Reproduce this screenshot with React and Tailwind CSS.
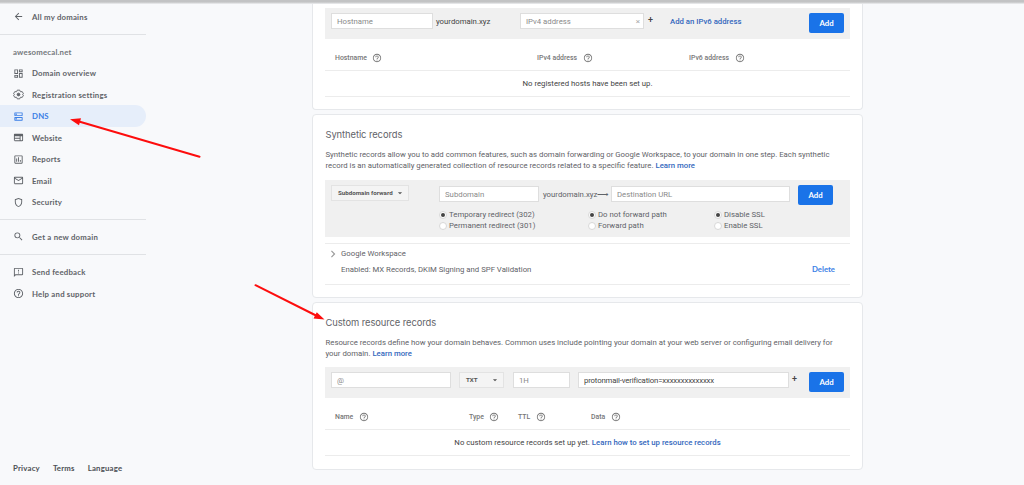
import React from "react";
import {
  MdArrowBack,
  MdArrowDropDown,
  MdChevronRight,
  MdHelpOutline,
  MdMailOutline,
  MdOutlineAssessment,
  MdOutlineDashboard,
  MdOutlineDns,
  MdOutlineFeedback,
  MdOutlineShield,
  MdOutlineWeb,
  MdSearch,
} from "react-icons/md";

const domainLinks = [
  { label: "Domain overview", icon: MdOutlineDashboard },
  { label: "Registration settings", icon: HexGear },
  { label: "DNS", icon: MdOutlineDns, active: true },
  { label: "Website", icon: MdOutlineWeb },
  { label: "Reports", icon: MdOutlineAssessment },
  { label: "Email", icon: MdMailOutline },
  { label: "Security", icon: MdOutlineShield },
];

const supportLinks = [
  { label: "Send feedback", icon: MdOutlineFeedback },
  { label: "Help and support", icon: MdHelpOutline },
];

export default function App() {
  return (
    <div className="relative flex h-[485px] w-[1024px] overflow-hidden bg-[#f8f9fb] font-['Roboto',sans-serif] text-[7.78px] leading-[11px] text-[#5f6368]">
      <Sidebar />
      <main className="ml-[166px] flex w-[551px] flex-col gap-[4px]">
        <RegisteredHosts />
        <SyntheticRecords />
        <CustomRecords />
      </main>

      {/* Bottom edge of the app bar */}
      <div className="absolute inset-x-0 top-0 h-[4px] bg-linear-to-b from-[#c2c3c4] from-50% to-[#f0f1f3]" />
      <Arrows />
    </div>
  );
}

/* Sidebar */
function Sidebar() {
  return (
    <aside className="flex w-[146px] flex-col font-['Lato',sans-serif] font-bold text-[#5f6368]">
      <div className="flex h-[35px] flex-col border-b border-[#e0e2e5] pt-[6px]">
        <NavItem label="All my domains" icon={MdArrowBack} />
      </div>
      <div className="mt-[12px] h-[10px] pl-[13px] text-[7.8px] leading-[10px] tracking-[0.2px] text-[#74787c]">
        awesomecal.net
      </div>
      <nav className="mt-[5.4px] h-[157.6px] border-b border-[#e0e2e5]">
        {domainLinks.map((item) => (
          <NavItem key={item.label} {...item} />
        ))}
      </nav>
      <div className="h-[35px] border-b border-[#e0e2e5] pt-[6px]">
        <NavItem label="Get a new domain" icon={MdSearch} />
      </div>
      <nav className="mt-[6.4px]">
        {supportLinks.map((item) => (
          <NavItem key={item.label} {...item} />
        ))}
      </nav>
      <footer className="mt-auto mb-[12px] flex gap-[13px] pl-[13px] text-[7.8px] leading-[10px] tracking-[0.2px] text-[#4c5054]">
        <a>Privacy</a>
        <a>Terms</a>
        <a>Language</a>
      </footer>
    </aside>
  );
}

function NavItem({ label, icon: Icon, active }) {
  return (
    <a
      className={`flex h-[21.5px] items-center gap-[8px] rounded-r-full pl-[13px] text-[7.8px] leading-[10px] tracking-[0.21px] ${
        active ? "bg-[#e6eefa] text-[#3b7fe6]" : ""
      }`}
    >
      <Icon className="size-[11px] shrink-0" />
      <span className="whitespace-nowrap">{label}</span>
    </a>
  );
}

/* Cards */
function RegisteredHosts() {
  return (
    <section className="h-[110px] rounded-b-[4px] border border-t-0 border-[#e6e8eb] bg-white px-[12px] pt-[8px]">
      <div className="flex h-[31px] bg-[#f0f0f0] pt-[5px] pl-[6px]">
        <Field placeholder="Hostname" className="w-[102px]" />
        <span className="ml-[3px] w-[84px] pt-[3px] text-[#444]">yourdomain.xyz</span>
        <div className="flex h-[16px] w-[124px] items-center border border-[#dedede] bg-white pr-[3px] pl-[5px]">
          <input
            placeholder="IPv4 address"
            className="w-full min-w-0 outline-none placeholder:text-[#8a8a8a]"
          />
          <span className="text-[8px] text-[#aaa]">×</span>
        </div>
        <span className="ml-[4px] w-[22px] pt-[2px] text-[9px] font-medium text-[#444]">+</span>
        <Link className="w-[139px] pt-[3px]">Add an IPv6 address</Link>
        <AddButton />
      </div>
      <div className="flex h-[32px] items-center border-b border-[#ececec] pt-[7px] pl-[10px]">
        <Heading className="w-[202px]" label="Hostname" />
        <Heading className="w-[152px]" label="IPv4 address" />
        <Heading label="IPv6 address" />
      </div>
      <div className="flex h-[26px] items-center justify-center border-b border-[#ececec] text-[#444]">
        No registered hosts have been set up.
      </div>
    </section>
  );
}

function SyntheticRecords() {
  return (
    <section className="h-[184px] rounded-[4px] border border-[#e6e8eb] bg-white px-[12px]">
      <Title>Synthetic records</Title>
      <p className="mt-[8px] ml-[0.5px] h-[22px] whitespace-nowrap">
        Synthetic records allow you to add common features, such as domain forwarding or Google
        Workspace, to your domain in one step. Each synthetic
        <br />
        record is an automatically generated collection of resource records related to a specific
        feature. <Link>Learn more</Link>
      </p>
      <div className="mt-[9px] h-[57px] bg-[#f0f0f0] pt-[6px] pl-[6px]">
        <div className="flex h-[23px]">
          <Dropdown label="Subdomain forward" className="-mt-px mr-[30px] w-[78px]" />
          <Field placeholder="Subdomain" className="w-[100px]" />
          <span className="ml-[4px] w-[68px] pt-[3px] whitespace-nowrap">yourdomain.xyz⟶</span>
          <Field placeholder="Destination URL" className="mr-[8px] w-[179px]" />
          <AddButton className="-mt-px" />
        </div>
        <div className="flex pl-[108px]">
          <RadioPair className="w-[149px]" options={["Temporary redirect (302)", "Permanent redirect (301)"]} />
          <RadioPair className="w-[126px]" options={["Do not forward path", "Forward path"]} />
          <RadioPair options={["Disable SSL", "Enable SSL"]} />
        </div>
      </div>
      <div className="mt-[6px] h-[42px] border-y border-[#ececec] pt-[4px] pl-[4px]">
        <div className="flex h-[11px] items-center gap-[1px]">
          <MdChevronRight className="-ml-[3px] size-[14px] text-[#9a9a9a]" />
          <span>Google Workspace</span>
        </div>
        <div className="mt-[5px] flex justify-between pr-[15px] pl-[12px]">
          <span>Enabled: MX Records, DKIM Signing and SPF Validation</span>
          <span className="font-['Lato',sans-serif] font-bold text-[#3b7fe6]">Delete</span>
        </div>
      </div>
    </section>
  );
}

function CustomRecords() {
  return (
    <section className="h-[168px] rounded-[4px] border border-[#e6e8eb] bg-white px-[12px]">
      <Title>Custom resource records</Title>
      <p className="mt-[8px] ml-[0.5px] h-[22px] whitespace-nowrap">
        Resource records define how your domain behaves. Common uses include pointing your domain at
        your web server or configuring email delivery for
        <br />
        your domain. <Link>Learn more</Link>
      </p>
      <div className="mt-[8px] flex h-[31px] bg-[#f0f0f0] pt-[5px] pl-[6px]">
        <Field placeholder="@" className="mr-[8px] w-[120px]" />
        <Dropdown label="TXT" className="mr-[9px] w-[45px]" />
        <Field placeholder="1H" className="mr-[8px] w-[57px]" />
        <Field
          defaultValue="protonmail-verification=xxxxxxxxxxxxxx"
          className="w-[211px] tracking-[-0.16px]"
        />
        <span className="ml-[3px] w-[17px] pt-[2px] text-[9px] font-medium text-[#444]">+</span>
        <AddButton />
      </div>
      <div className="flex h-[32px] items-center border-b border-[#ececec] pt-[7px] pl-[10px]">
        <Heading className="w-[134px]" label="Name" />
        <Heading className="w-[49px]" label="Type" />
        <Heading className="w-[73px]" label="TTL" />
        <Heading label="Data" />
      </div>
      <div className="flex h-[26px] items-center justify-center gap-[2px] border-b border-[#ececec] text-[#444]">
        No custom resource records set up yet. <Link>Learn how to set up resource records</Link>
      </div>
    </section>
  );
}

/* UI bits */
function Title({ children }) {
  return (
    <h2 className="mt-[13px] ml-[0.5px] h-[13px] font-['Inter',sans-serif] text-[9.4px] leading-[13px] tracking-[-0.08px] text-[#5f6368]">
      {children}
    </h2>
  );
}

function Link({ className = "", children }) {
  return <a className={`font-medium whitespace-nowrap text-[#3367bd] ${className}`}>{children}</a>;
}

function Field({ className, ...props }) {
  return (
    <input
      className={`block h-[16px] shrink-0 border border-[#dedede] bg-white px-[5px] text-[#444] outline-none placeholder:text-[#8a8a8a] ${className}`}
      {...props}
    />
  );
}

function Dropdown({ label, className }) {
  return (
    <button
      className={`flex h-[16px] shrink-0 items-center justify-between border border-[#e3e3e3] bg-[#f4f4f4] pr-[3px] pl-[6px] text-[6.2px] font-bold whitespace-nowrap text-[#555] ${className}`}
    >
      {label}
      <MdArrowDropDown className="size-[10px]" />
    </button>
  );
}

function AddButton({ className = "" }) {
  return (
    <button
      className={`h-[20px] w-[35px] shrink-0 rounded-[2px] bg-[#1a73e8] font-['Lato',sans-serif] text-[7.8px] font-bold text-white ${className}`}
    >
      Add
    </button>
  );
}

function Heading({ label, className = "" }) {
  return (
    <div className={`flex items-center gap-[5.5px] text-[6.9px] font-medium text-[#777] ${className}`}>
      {label}
      <MdHelpOutline className="size-[10px]" />
    </div>
  );
}

function RadioPair({ options, className = "" }) {
  return (
    <div className={className}>
      {options.map((option, i) => (
        <label key={option} className="flex h-[11px] items-center gap-[2px] whitespace-nowrap">
          <span className="grid size-[8px] place-items-center rounded-full border border-[#d8d8d8] bg-white">
            {i === 0 && <span className="size-[4px] rounded-full bg-[#444]" />}
          </span>
          {option}
        </label>
      ))}
    </div>
  );
}

function HexGear({ className }) {
  return (
    <svg viewBox="0 0 24 24" className={className} fill="none" stroke="currentColor" strokeWidth="2">
      <path
        strokeLinejoin="round"
        d="M9.2 2.5h5.6l.8 2.8 1.6.9 2.8-.7 2.8 4.8-2 1.7 2 1.7-2.8 4.8-2.8-.7-1.6.9-.8 2.8H9.2l-.8-2.8-1.6-.9-2.8.7-2.8-4.8 2-1.7-2-1.7L4 5.500l2.800.7 1.600-.9z"
      />
      <circle cx="12" cy="12" r="3" fill="currentColor" />
    </svg>
  );
}

/* Pointers to the DNS tab and the custom records card */
function Arrows() {
  return (
    <svg className="pointer-events-none absolute inset-0" width="1024" height="485" fill="#fd0d0d" stroke="#fd0d0d">
      <path d="M199.500 156.700L79 121.500M255.500 285.200L316 315.500" strokeWidth="2" strokeLinecap="round" />
      <path d="M70 119.200L81 118.300L79 125.200ZM324.500 319.500L316.800 312.300L313.500 318.600Z" stroke="none" />
    </svg>
  );
}
